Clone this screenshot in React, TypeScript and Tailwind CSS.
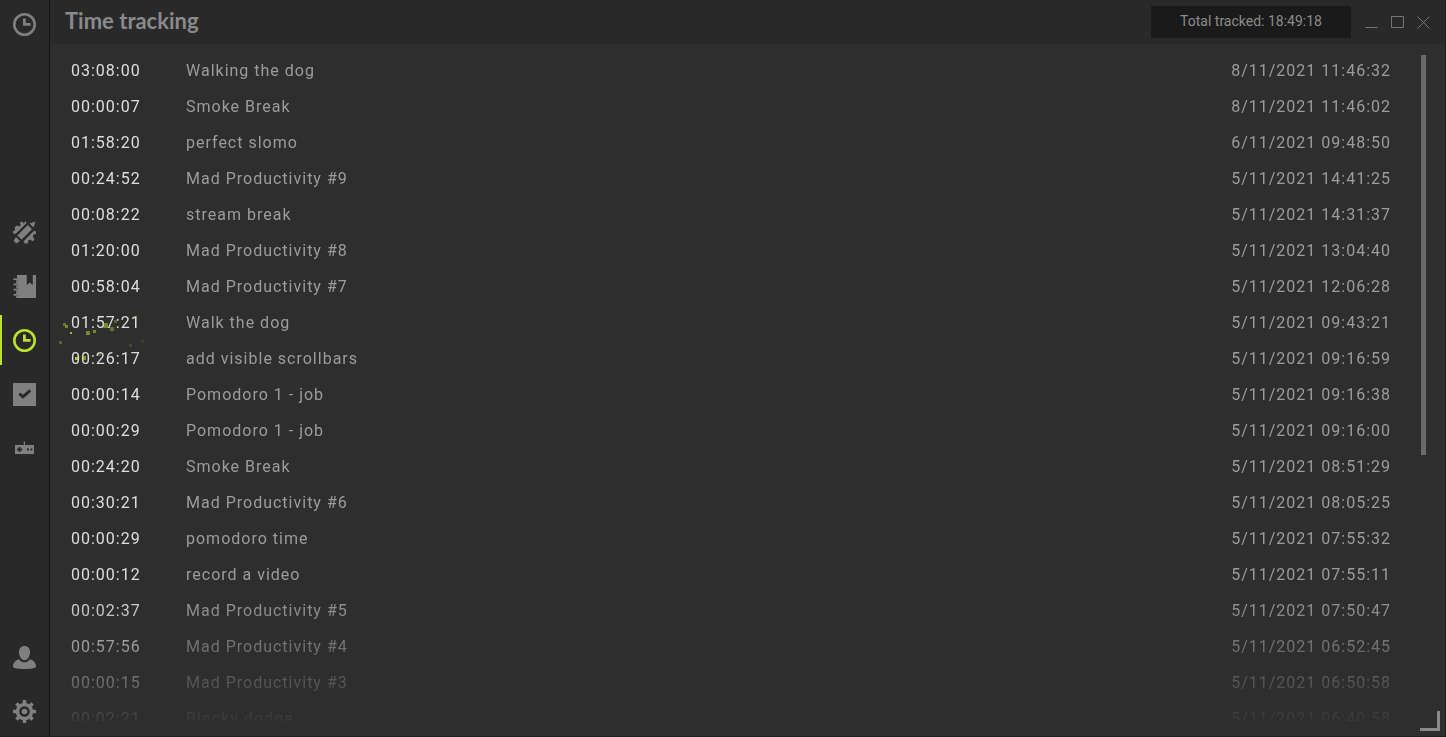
import { useState } from "react";
import type { ReactNode } from "react";

type Entry = { time: string; name: string; date: string };

const entries: Entry[] = [
  { time: "03:08:00", name: "Walking the dog", date: "8/11/2021 11:46:32" },
  { time: "00:00:07", name: "Smoke Break", date: "8/11/2021 11:46:02" },
  { time: "01:58:20", name: "perfect slomo", date: "6/11/2021 09:48:50" },
  { time: "00:24:52", name: "Mad Productivity #9", date: "5/11/2021 14:41:25" },
  { time: "00:08:22", name: "stream break", date: "5/11/2021 14:31:37" },
  { time: "01:20:00", name: "Mad Productivity #8", date: "5/11/2021 13:04:40" },
  { time: "00:58:04", name: "Mad Productivity #7", date: "5/11/2021 12:06:28" },
  { time: "01:57:21", name: "Walk the dog", date: "5/11/2021 09:43:21" },
  { time: "00:26:17", name: "add visible scrollbars", date: "5/11/2021 09:16:59" },
  { time: "00:00:14", name: "Pomodoro 1 - job", date: "5/11/2021 09:16:38" },
  { time: "00:00:29", name: "Pomodoro 1 - job", date: "5/11/2021 09:16:00" },
  { time: "00:24:20", name: "Smoke Break", date: "5/11/2021 08:51:29" },
  { time: "00:30:21", name: "Mad Productivity #6", date: "5/11/2021 08:05:25" },
  { time: "00:00:29", name: "pomodoro time", date: "5/11/2021 07:55:32" },
  { time: "00:00:12", name: "record a video", date: "5/11/2021 07:55:11" },
  { time: "00:02:37", name: "Mad Productivity #5", date: "5/11/2021 07:50:47" },
  { time: "00:57:56", name: "Mad Productivity #4", date: "5/11/2021 06:52:45" },
  { time: "00:00:15", name: "Mad Productivity #3", date: "5/11/2021 06:50:58" },
  { time: "00:02:21", name: "Blocky dodge", date: "5/11/2021 06:40:58" },
];

// x, y, size, opacity
const particles = [
  [6, 5, 3, 0.5],
  [4, 3, 3, 0.4],
  [11, 12, 2, 0.8],
  [0, 21, 3, 0.3],
  [27, 11, 4, 0.5],
  [34, 10, 3, 0.5],
  [44, 3, 5, 0.5],
  [51, 7, 4, 0.4],
  [55, 0, 3, 0.3],
  [73, -4, 3, 0.12],
  [70, 24, 3, 0.15],
  [82, 20, 3, 0.08],
  [16, 37, 3, 0.9],
  [23, 36, 4, 0.6],
  [39, 33, 3, 0.3],
];

function Icon({ children }: { children: ReactNode }) {
  return (
    <svg viewBox="0 0 23 23" className="size-[23px]" fill="currentColor" aria-hidden="true">
      {children}
    </svg>
  );
}

function ClockIcon() {
  return (
    <Icon>
      <circle cx="11.5" cy="11.5" r="10.2" fill="none" stroke="currentColor" strokeWidth="2.6" />
      <path d="M10 5.5h2.8v4.4h4.8v2.8H10z" />
    </Icon>
  );
}

function ToolsIcon() {
  return (
    <Icon>
      <path d="M14.8 4 19 8.2 8.6 18.6 4.4 14.4zM16.4 2.4 22.4.4 20.600 6.600zM3 16 7 20 3.200 22.400.6 19.800z" />
      <path d="M12.4 0 13.6 1.9 2.8 12.7 0 12.4V10.2L2.2 9.2 1.6 6.400 3.800 4.400 6.400 5.400 7.800 4 6.800 1.600 9 .4 10.800 2.400z" />
      <path d="M21 9.800 23 10.600V12.800L20.400 13.800 19.800 15.800 21.600 18.200 19.600 20.200 17 18.600 15.200 19.600 14.800 22.400H12L10.400 20.400z" />
    </Icon>
  );
}

function NotebookIcon() {
  return (
    <Icon>
      <path d="M4 0h9.8v10l3-2.6 3 2.6V0H23v23H3.2v-2.1H5.2v-2H3.2v-3.3H5.2v-2H3.2v-3.2H5.2V8.5H3.2V5.3H5.2V3.2H4z" />
      <path
        d="M4.5 4.2H1.2M4.5 9.4H1.2M4.5 14.6H1.2M4.5 19.8H1.2"
        stroke="currentColor"
        strokeWidth="1.8"
        strokeLinecap="round"
      />
    </Icon>
  );
}

function CheckIcon() {
  return (
    <Icon>
      <path d="M0 0h23v23H0z" />
      <path d="M7.200 11.400 10 13.800 16.400 8.200" fill="none" stroke="#292929" strokeWidth="3" strokeLinecap="round" />
    </Icon>
  );
}

function GamepadIcon() {
  return (
    <Icon>
      <path d="M2 8h8.800V4.600h1.200v3.400H21v9H2z" />
      <path d="M5.600 10h1.800v1.600h1.700v1.800H7.400v1.700H5.600v-1.700H4v-1.800h1.600zM14 11.400h2v2h-2zM17.400 11.400h2v2h-2z" fill="#292929" />
    </Icon>
  );
}

function UserIcon() {
  return (
    <Icon>
      <path d="M11.5 0c3.4 0 5.5 2.3 5.5 6 0 4.300-2.300 8.300-5.500 8.300S6 10.300 6 6c0-3.700 2.100-6 5.500-6z" />
      <path d="M6 13.200c1.400 2 3.300 3.100 5.500 3.100s4.100-1.100 5.500-3.100c3.700 1.100 6 3.700 6 7.300 0 1.800-5 2.500-11.500 2.500S0 22.300 0 20.500c0-3.600 2.300-6.200 6-7.300z" />
    </Icon>
  );
}

function GearIcon() {
  return (
    <Icon>
      <circle cx="11.5" cy="11.5" r="7" fill="none" stroke="currentColor" strokeWidth="3.4" />
      <circle cx="11.5" cy="11.5" r="2.8" />
      <path
        d="M11.5 0v4M11.500 19v4M0 11.500h4M19 11.500h4M3.400 3.400l2.800 2.800M16.800 16.800l2.800 2.800M3.400 19.600l2.800-2.800M16.800 6.200l2.800-2.800"
        stroke="currentColor"
        strokeWidth="3.6"
      />
    </Icon>
  );
}

const tabs = [
  { id: "tools", label: "Tools", icon: <ToolsIcon /> },
  { id: "notes", label: "Notes", icon: <NotebookIcon /> },
  { id: "time", label: "Time tracking", icon: <ClockIcon /> },
  { id: "tasks", label: "Tasks", icon: <CheckIcon /> },
  { id: "games", label: "Games", icon: <GamepadIcon /> },
];

function Sidebar() {
  const [active, setActive] = useState("time");

  return (
    <nav className="flex w-[50px] shrink-0 flex-col justify-between border-r border-[#101010] bg-[#292929] text-[#808080]">
      <button aria-label="Timer" className="flex h-12 items-center justify-center">
        <ClockIcon />
      </button>

      <div className="flex flex-col gap-1">
        {tabs.map((tab) => (
          <button
            key={tab.id}
            aria-label={tab.label}
            onClick={() => setActive(tab.id)}
            className={
              tab.id === active
                ? "flex h-[50px] items-center justify-center border-l-2 border-[#b9e22f] pr-[2px] text-[#b9e22f]"
                : "flex h-[50px] items-center justify-center"
            }
          >
            {tab.icon}
          </button>
        ))}
      </div>

      <div className="flex flex-col gap-1">
        <button aria-label="Profile" className="flex h-[50px] items-center justify-center">
          <UserIcon />
        </button>
        <button aria-label="Settings" className="flex h-[50px] items-center justify-center">
          <GearIcon />
        </button>
      </div>
    </nav>
  );
}

function WindowButton({ label, d }: { label: string; d: string }) {
  return (
    <button aria-label={label} className="flex h-8 w-[26px] items-center justify-center text-[#757575]">
      <svg viewBox="0 0 13 13" className="size-[13px]" fill="none" stroke="currentColor" aria-hidden="true">
        <path d={d} />
      </svg>
    </button>
  );
}

function Header() {
  return (
    <header className="flex h-11 shrink-0 items-center bg-[#292929] pr-[9px] pl-[15px]">
      <h1 className="flex-1 pb-[2px] font-['Lato',sans-serif] text-[22px] leading-6 font-bold text-[#8a8a8a]">
        Time tracking
      </h1>
      <div className="mr-[7px] flex h-8 w-[200px] items-center justify-center bg-[#1a1a1a] pb-[2px] text-sm text-[#8c8c8c]">
        Total tracked: 18:49:18
      </div>
      <WindowButton label="Minimize" d="M.5 11.500h12" />
      <WindowButton label="Maximize" d="M.5.5h12v11H.5z" />
      <WindowButton label="Close" d="M.5.5l12 12M12.500.5l-12 12" />
    </header>
  );
}

export default function App() {
  return (
    <div className="flex h-screen bg-[#1d1d22] pr-px pb-px font-['Roboto',sans-serif]">
      <Sidebar />

      <div className="relative flex min-w-0 flex-1 flex-col bg-[#2e2e2e]">
        <Header />

        <main className="flex min-h-0 flex-1 pt-[9px] pr-[19px] pb-[15px] pl-[21px]">
          <div className="min-w-0 flex-1 overflow-hidden [mask-image:linear-gradient(to_bottom,black_calc(100%-130px),transparent_calc(100%+12px))]">
            <table className="w-full text-base tracking-[1px]">
              <tbody>
                {entries.map((entry) => (
                  <tr key={entry.date} className="h-9">
                    <td className="w-[115px] p-0 text-[#dedede]">{entry.time}</td>
                    <td className="p-0 text-[#9c9c9c]">{entry.name}</td>
                    <td className="p-0 text-right text-[#9c9c9c]">{entry.date}</td>
                  </tr>
                ))}
              </tbody>
            </table>
          </div>

          <div className="ml-[30px] w-[5px] pt-[2px]">
            <div className="h-3/5 bg-[#6a6a6a]" />
          </div>
        </main>

        {/* sparks flying off the active tab */}
        <svg
          className="pointer-events-none absolute top-[320px] left-[9px] h-12 w-24 overflow-visible"
          fill="#b9e22f"
          aria-hidden="true"
        >
          {particles.map(([x, y, size, opacity]) => (
            <rect key={`${x}-${y}`} x={x} y={y} width={size} height={size} opacity={opacity} />
          ))}
        </svg>

        <div className="absolute right-[5px] bottom-[5px] size-5 border-r-[3px] border-b-[3px] border-[#8a8a8a]" />
      </div>
    </div>
  );
}
